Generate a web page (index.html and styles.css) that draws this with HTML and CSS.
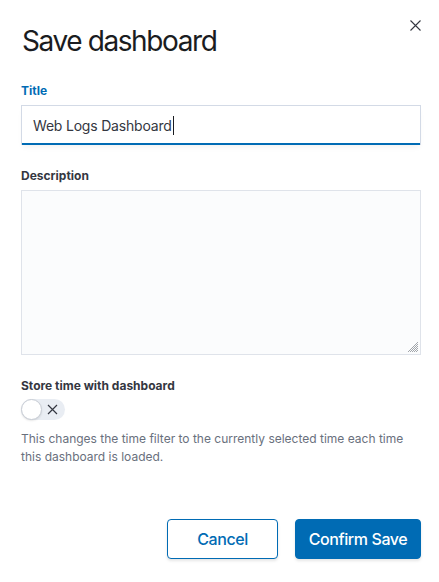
FILE: index.html
```html
<!DOCTYPE html>
<html lang="en">
<head>
<meta charset="utf-8">
<title>Save dashboard</title>
<link rel="stylesheet" href="styles.css">
</head>
<body>
<div class="modal">
  <button class="close" aria-label="Close">
    <svg width="11" height="11" viewBox="0 0 11 11"><path d="M0.5 0.5L10.5 10.5M10.5 0.5L0.5 10.5" stroke="#343741" stroke-width="1.1" fill="none"/></svg>
  </button>
  <h1 class="heading">Save dashboard</h1>
  <div class="form">
    <div class="row">
      <label class="label label-active">Title</label>
      <div class="input input-focus"><span class="value">Web Logs Dashboard</span><span class="caret"></span></div>
    </div>
    <div class="row">
      <label class="label">Description</label>
      <div class="textarea">
        <svg class="grip" width="12" height="12" viewBox="0 0 12 12"><path d="M11 3L3 11M11 5L5 11M11 7L7 11M11 9L9 11M11 1L1 11" stroke="#8b8f96" stroke-width="0.8"/></svg>
      </div>
    </div>
    <div class="row">
      <label class="label">Store time with dashboard</label>
      <div class="switch">
        <span class="knob"></span>
        <svg class="switch-x" width="11" height="11" viewBox="0 0 11 11"><path d="M1 1L10 10M10 1L1 10" stroke="#343741" stroke-width="1.2" fill="none"/></svg>
      </div>
      <p class="help">This changes the time filter to the currently selected time each time this dashboard is loaded.</p>
    </div>
  </div>
  <div class="footer">
    <button class="btn btn-empty">Cancel</button>
    <button class="btn btn-fill">Confirm Save</button>
  </div>
</div>
</body>
</html>
```
FILE: styles.css
```css
html, body {
  margin: 0;
  padding: 0;
  background: #ffffff;
}
body {
  font-family: Inter, "Noto Sans", sans-serif;
  color: #343741;
}
.modal {
  position: relative;
  width: 439px;
  height: 582px;
  box-sizing: border-box;
  padding: 23px 18px 0 21px;
  display: flex;
  flex-direction: column;
}
.close {
  position: absolute;
  top: 20px;
  right: 18px;
  width: 11px;
  height: 11px;
  padding: 0;
  border: 0;
  background: none;
  display: flex;
}
.heading {
  margin: 0 0 0 1px;
  font-size: 28px;
  font-weight: 400;
  line-height: 36px;
  color: #1a1c21;
  letter-spacing: -1.4px;
}
.form {
  margin-top: 24px;
  display: flex;
  flex-direction: column;
  gap: 23px;
}
.row {
  display: flex;
  flex-direction: column;
}
.label {
  font-size: 12px;
  font-weight: 700;
  line-height: 15px;
  color: #343741;
  margin-bottom: 7px;
}
.label-active {
  color: #006bb4;
}
.input {
  height: 40px;
  box-sizing: border-box;
  border: 1px solid #d3dae6;
  border-bottom: 0;
  background: #ffffff;
  padding: 0 11px;
  display: flex;
  align-items: center;
  font-size: 14px;
  letter-spacing: -0.2px;
  color: #343741;
  box-shadow: inset 0 -2px 0 0 #006bb4, 0 4px 6px -2px rgba(0,0,0,0.06);
}
.caret {
  display: inline-block;
  width: 1px;
  height: 19px;
  background: #1a1c21;
  margin-left: 1px;
}
.textarea {
  position: relative;
  height: 165px;
  box-sizing: border-box;
  border: 1px solid #dfe3ea;
  background: #fbfcfd;
}
.grip {
  position: absolute;
  right: 1px;
  bottom: 1px;
}
.switch {
  position: relative;
  width: 44px;
  height: 21px;
  border-radius: 11px;
  background: #e9edf3;
  margin-top: -1px;
}
.knob {
  position: absolute;
  left: 0;
  top: 0;
  width: 21px;
  height: 21px;
  box-sizing: border-box;
  border-radius: 50%;
  background: #ffffff;
  border: 1px solid #c8cdd5;
  box-shadow: 0 1px 2px rgba(0,0,0,0.1);
}
.switch-x {
  position: absolute;
  left: 26px;
  top: 5px;
}
.help {
  margin: 10px 0 0 0;
  font-size: 12px;
  line-height: 18px;
  color: #69707d;
}
.footer {
  margin-top: auto;
  margin-bottom: 23px;
  display: flex;
  justify-content: flex-end;
  gap: 17px;
}
.btn {
  height: 40px;
  box-sizing: border-box;
  border-radius: 4px;
  font-family: Inter, "Noto Sans", sans-serif;
  font-size: 16px;
  font-weight: 500;
  letter-spacing: -0.4px;
  white-space: nowrap;
  padding: 0;
}
.btn-empty {
  width: 111px;
  background: #ffffff;
  color: #006bb4;
  border: 1px solid #006bb4;
  box-shadow: 0 2px 3px rgba(0,0,0,0.1);
}
.btn-fill {
  width: 126px;
  background: #006bb4;
  color: #ffffff;
  border: 1px solid #006bb4;
  box-shadow: 0 2px 3px rgba(0,0,0,0.1);
}
```
